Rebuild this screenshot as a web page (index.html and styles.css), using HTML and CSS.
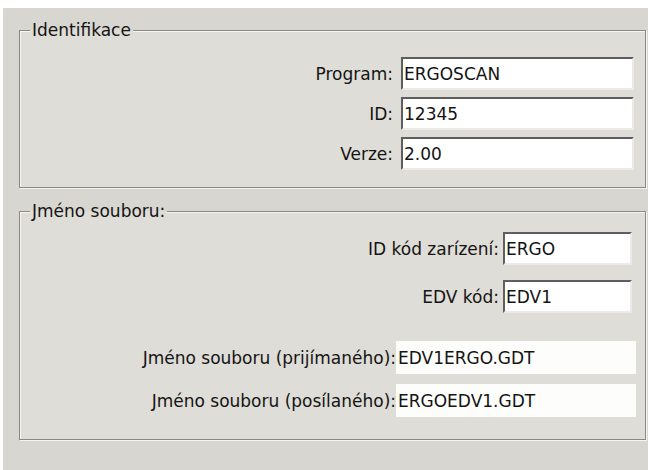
FILE: index.html
```html
<!DOCTYPE html>
<html lang="cs">
<head>
<meta charset="utf-8">
<title>Identifikace</title>
<link rel="stylesheet" href="styles.css">
</head>
<body>
<div class="window">
  <fieldset class="group group-id">
    <legend>Identifikace</legend>
    <div class="rows">
      <div class="row">
        <label class="lbl">Program:</label>
        <input class="field field-wide" type="text" value="ERGOSCAN">
      </div>
      <div class="row">
        <label class="lbl">ID:</label>
        <input class="field field-wide" type="text" value="12345">
      </div>
      <div class="row">
        <label class="lbl">Verze:</label>
        <input class="field field-wide" type="text" value="2.00">
      </div>
    </div>
  </fieldset>
  <fieldset class="group group-file">
    <legend>Jméno souboru:</legend>
    <div class="rows">
      <div class="row row-code">
        <label class="lbl lbl-tight">ID kód zarízení:</label>
        <input class="field field-short" type="text" value="ERGO">
      </div>
      <div class="row row-code row-second">
        <label class="lbl lbl-tight">EDV kód:</label>
        <input class="field field-short" type="text" value="EDV1">
      </div>
      <div class="row row-name row-first-name">
        <label class="lbl lbl-none">Jméno souboru (prijímaného):</label>
        <input class="flat" type="text" value="EDV1ERGO.GDT" readonly>
      </div>
      <div class="row row-name row-second-name">
        <label class="lbl lbl-none">Jméno souboru (posílaného):</label>
        <input class="flat" type="text" value="ERGOEDV1.GDT" readonly>
      </div>
    </div>
  </fieldset>
</div>
</body>
</html>
```
FILE: styles.css
```css
html, body {
  margin: 0;
  padding: 0;
  background: #ffffff;
}

body {
  font-family: "DejaVu Sans", "Liberation Sans", sans-serif;
  font-size: 17px;
  color: #141414;
}

.window {
  margin: 8px 0 0 3px;
  width: 645px;
  height: 462px;
  box-sizing: border-box;
  padding: 12px 0 0 16px;
  background: #d8d6d0;
  display: flex;
  flex-direction: column;
}

.group {
  margin: 0;
  width: 627px;
  min-width: 0;
  box-sizing: border-box;
  border: 1px solid #8a8883;
  box-shadow: inset 1px 1px 0 #f6f5f2, 1px 1px 0 #f6f5f2;
  background: #dfddd7;
}

.group legend {
  margin-left: 10px;
  padding: 0 2px;
  line-height: 20px;
  background: linear-gradient(#d8d6d0 50%, #dfddd7 50%);
  color: #141414;
}

.group-id {
  padding: 17px 11px 17px 0;
}

.group-file {
  margin-top: 13px;
  padding: 11px 0 22px 0;
}

.rows {
  display: flex;
  flex-direction: column;
  gap: 7px;
}

.row {
  display: flex;
  justify-content: flex-end;
  align-items: center;
  height: 33px;
}

.lbl {
  margin-right: 8px;
  line-height: 20px;
  white-space: nowrap;
}

.lbl-tight {
  margin-right: 4px;
}

.lbl-none {
  margin-right: 0;
}

.field {
  box-sizing: border-box;
  height: 33px;
  margin: 0;
  padding: 0 0 0 1px;
  border: 2px solid;
  border-color: #5e5e5c #eceae5 #eceae5 #5e5e5c;
  background: #ffffff;
  font-family: "DejaVu Sans", "Liberation Sans", sans-serif;
  font-size: 17px;
  color: #141414;
  outline: none;
}

.field-wide {
  width: 233px;
}

.field-short {
  width: 129px;
}

.row-code {
  margin-right: 13px;
}

.row-second {
  margin-top: 8px;
}

.row-name {
  margin-right: 9px;
}

.row-first-name {
  margin-top: 21px;
}

.row-second-name {
  margin-top: 3px;
}

.flat {
  box-sizing: border-box;
  width: 240px;
  height: 33px;
  margin: 0;
  padding: 0 0 0 2px;
  border: 0;
  background: #fdfdfb;
  font-family: "DejaVu Sans", "Liberation Sans", sans-serif;
  font-size: 17px;
  color: #141414;
  outline: none;
}
```
